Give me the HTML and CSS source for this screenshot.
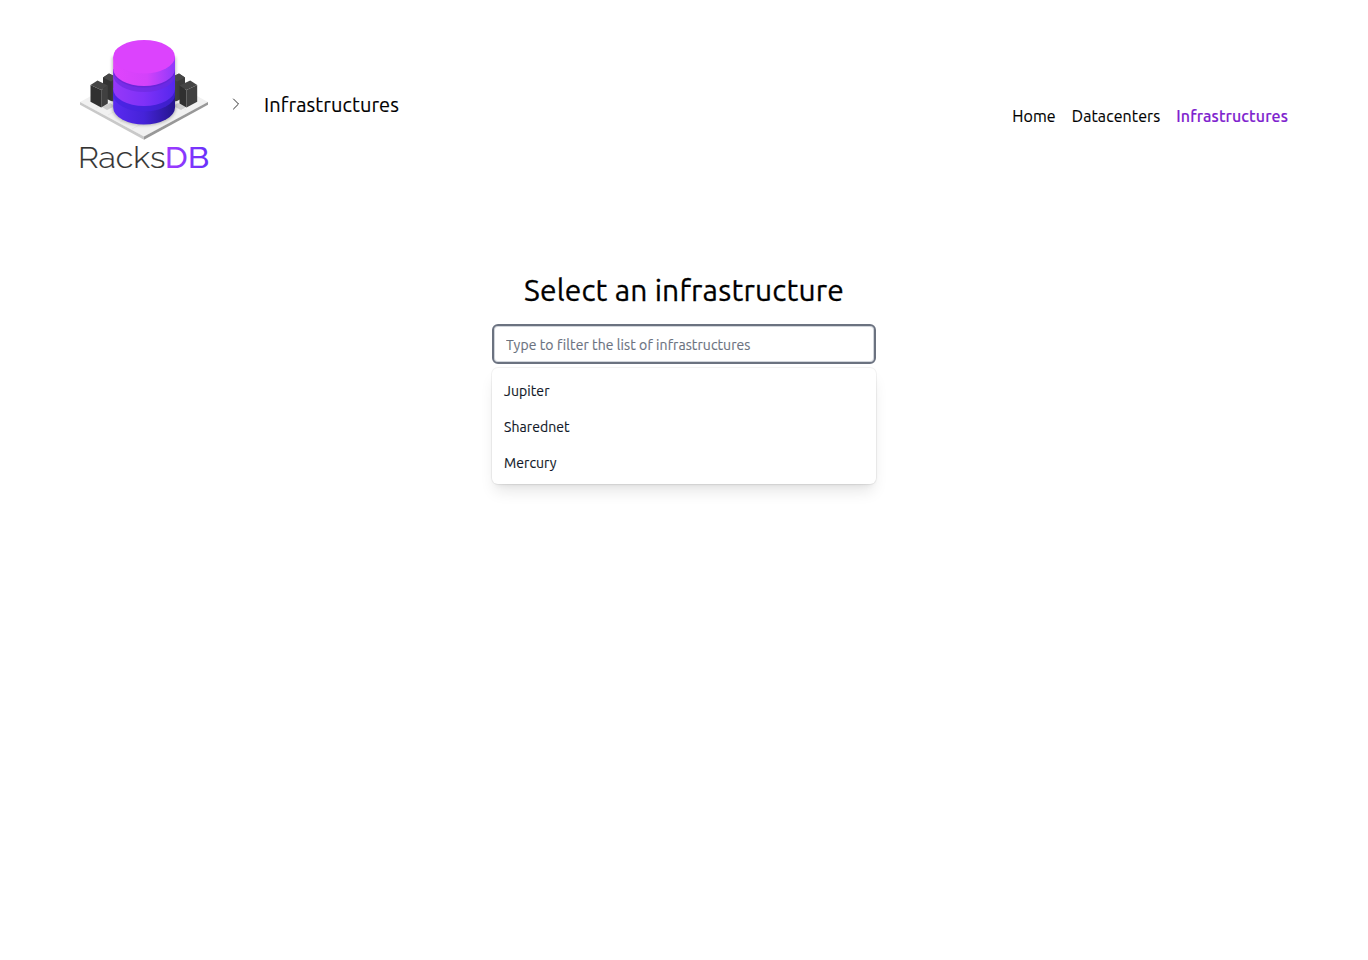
FILE: index.html
```html
<!DOCTYPE html>
<html lang="en">
<head>
<meta charset="utf-8">
<title>RacksDB</title>
<link rel="stylesheet" href="styles.css">
</head>
<body>
<header class="header">
  <div class="brand">
    <svg class="logo" viewBox="80 40 129 129" role="img" aria-label="RacksDB">
      <defs>
        <linearGradient id="g1"><stop offset="0" stop-color="#e044fc"/><stop offset=".55" stop-color="#d342fa"/><stop offset="1" stop-color="#8f39fb"/></linearGradient>
        <linearGradient id="g2"><stop offset="0" stop-color="#9638f8"/><stop offset=".5" stop-color="#7f31f8"/><stop offset="1" stop-color="#5527ed"/></linearGradient>
        <linearGradient id="g3"><stop offset="0" stop-color="#5a2af0"/><stop offset=".5" stop-color="#4523d8"/><stop offset="1" stop-color="#25158d"/></linearGradient>
        <linearGradient id="g4"><stop offset="0" stop-color="#a33cff"/><stop offset="1" stop-color="#6630fa"/></linearGradient>
        <filter id="soft" x="-20%" y="-20%" width="140%" height="140%"><feGaussianBlur stdDeviation="1.5"/></filter>
      </defs>
      <path fill="#f1f1f1" d="M80 102 144 67l64 35-64 34.500z"/>
      <path fill="none" stroke="#dedede" stroke-width=".5" d="m96 108 32-17m-20 24 36-19m-24 26 36-18m-24 25 44-23M100 101l44 24m-34-30 46 25m4-24 26 14"/>
      <path fill="#c9c9c9" d="m80 102 64 34.500v3.200L80 104.800z"/>
      <path fill="#989898" d="m208 102-64 34.500v3.200l64-34.900z"/>
      <path fill="#333" d="m103 77.500 6-4 8 4V102l-6-1-8-4z"/>
      <path fill="#484848" d="m103 77.500 6-4 8 4-6 4z"/>
      <path fill="#ccc" d="m102 107 8-4 5 3-8 4z"/>
      <path fill="#303030" d="m90.500 85 10.700 5v17.500l-10.700-5.700z"/>
      <path fill="#404040" d="m101.200 90 6.600-4.500v18l-6.600 4z"/>
      <path fill="#454545" d="m90.500 85 7-4.500 10.300 5-6.600 4.500z"/>
      <path fill="#3c3c3c" d="m185 77.500-6-4-8 4V102l6-1 8-4z"/>
      <path fill="#484848" d="m185 77.500-6-4-8 4 6 4z"/>
      <path fill="#ccc" d="m186 107-8-4-5 3 8 4z"/>
      <path fill="#404040" d="m197.200 85-10.700 5v17.500l10.700-5.700z"/>
      <path fill="#303030" d="m186.500 90-7-4.500v18l7 4z"/>
      <path fill="#454545" d="m197.200 85-7-4.500-10.700 5 7 4.500z"/>
      <path fill="#555" opacity=".35" filter="url(#soft)" d="M112 57h64v52c-3 22-61 22-64 0z"/>
      <path fill="url(#g3)" d="M113.200 88h61.800v19.500a30.900 17 0 0 1-61.800 0z"/>
      <path fill="#4622df" opacity=".7" d="M113.200 88h61.800v6.500a30.900 17 0 0 1-61.800 0z"/>
      <path fill="url(#g2)" d="M113.200 69h61.800v20a30.900 17 0 0 1-61.800 0z"/>
      <path fill="#6d29df" opacity=".7" d="M113.200 69h61.800v6a30.900 17 0 0 1-61.800 0z"/>
      <path fill="#5f22c8" opacity=".45" d="M113.200 69h61.800v1.500a30.900 17 0 0 1-61.800 0z"/>
      <path fill="url(#g1)" d="M113.200 57h61.800v12a30.900 17 0 0 1-61.800 0z"/>
      <ellipse cx="144.100" cy="56.700" rx="30.900" ry="16.700" fill="#dc43fd"/>
      <text class="logo-racks" x="78" y="167.800" textLength="87.500" lengthAdjust="spacingAndGlyphs">Racks</text>
      <text class="logo-db" x="164.700" y="167.800" textLength="44.500" lengthAdjust="spacingAndGlyphs" fill="url(#g4)">DB</text>
    </svg>
    <svg class="chevron" viewBox="0 0 24 24" fill="none" stroke="currentColor" stroke-width="1.500" stroke-linecap="round" stroke-linejoin="round"><path d="m8.250 4.500 7.500 7.500-7.500 7.500"/></svg>
    <span class="crumb">Infrastructures</span>
  </div>
  <nav class="nav">
    <a>Home</a>
    <a>Datacenters</a>
    <a class="nav-active">Infrastructures</a>
  </nav>
</header>
<main class="main">
  <h1 class="title">Select an infrastructure</h1>
  <div class="combo">
    <input class="filter" type="text" placeholder="Type to filter the list of infrastructures">
    <ul class="options">
      <li>Jupiter</li>
      <li>Sharednet</li>
      <li>Mercury</li>
    </ul>
  </div>
</main>
</body>
</html>
```
FILE: styles.css
```css
* { box-sizing: border-box; }
body { margin: 0; min-height: 960px; background: #fff; color: #000; font-family: Ubuntu, "Noto Sans", sans-serif; font-size: 16px; line-height: 24px; -webkit-text-stroke: .15px currentColor; }
.header { display: flex; justify-content: space-between; padding: 40px 80px 0; height: 169px; }
.brand { display: flex; align-items: flex-start; }
.logo { width: 129px; height: 129px; overflow: visible; -webkit-text-stroke: 0; }
.logo-racks, .logo-db { font-family: Raleway, Lato, sans-serif; font-size: 30px; }
.logo-racks { font-weight: 300; fill: #333; stroke: #333; stroke-width: .2px; }
.logo-db { font-weight: 500; }
.chevron { width: 16px; height: 16px; margin: 56px 0 0 19px; color: #333; }
.crumb { margin: 51px 0 0 20px; font-size: 20px; line-height: 28px; letter-spacing: .11px; white-space: nowrap; }
.nav { display: flex; gap: 16px; padding-top: 64px; letter-spacing: .1px; white-space: nowrap; }
.nav .nav-active { color: #7e22ce; font-weight: 500; letter-spacing: .13px; }
.main { display: flex; flex-direction: column; align-items: center; padding-top: 103px; }
.title { margin: 0; font-size: 30px; font-weight: 400; line-height: 36px; letter-spacing: .19px; white-space: nowrap; -webkit-text-stroke-width: .3px; }
.combo { width: 384px; margin-top: 16px; }
.filter { display: block; width: 384px; height: 40px; border: 2px solid #6b7280; border-radius: 6px; box-shadow: inset 0 0 0 1px #d1d5db; padding: 2px 12px 0; font: 14px/20px Ubuntu, "Noto Sans", sans-serif; letter-spacing: .08px; outline: none; }
.filter::placeholder { color: #6b7280; opacity: 1; }
.options { list-style: none; margin: 4px 0 0; padding: 4px 0; height: 116px; border-radius: 6px; background: #fff; box-shadow: 0 0 0 1px rgba(0,0,0,.05), 0 10px 15px -3px rgba(0,0,0,.1), 0 4px 6px -4px rgba(0,0,0,.1); }
.options li { height: 36px; padding: 9px 12px 7px; font-size: 14px; line-height: 20px; letter-spacing: .08px; color: #111827; }
```
